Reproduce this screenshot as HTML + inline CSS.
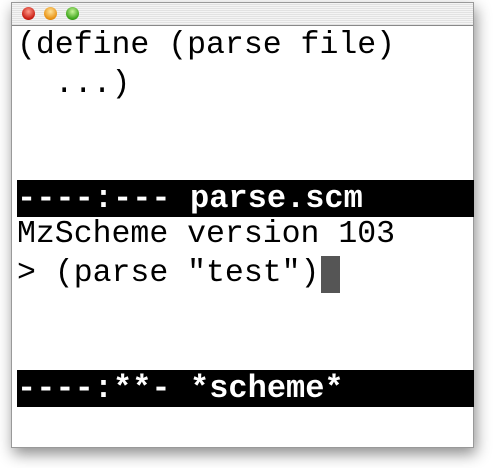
<!DOCTYPE html>
<html><head><style>
html,body{margin:0;padding:0;background:#fff;width:503px;height:468px;overflow:hidden;position:relative}
.win{position:absolute;left:11px;top:2px;width:463px;height:446px;background:#fff;box-shadow:2px 6px 14px rgba(0,0,0,0.45);border:1px solid #999;box-sizing:border-box}
.title{position:absolute;left:0;top:0;right:0;height:22px;background:repeating-linear-gradient(#f4f4f4 0 1px,#e2e2e2 1px 2px);border-bottom:1px solid #888}
.btn{position:absolute;top:4px;width:13px;height:13px;border-radius:50%}
.t{position:absolute;font-family:"Liberation Mono",monospace;font-size:31.5px;color:#000;white-space:pre;line-height:30px}
.bar{position:absolute;left:5px;width:457px;height:37px;background:#000}
.m{position:absolute;font-family:"Liberation Mono",monospace;font-weight:bold;font-size:32px;color:#fff;white-space:pre;line-height:37px;top:0}
</style></head><body>
<div class="win">
<div class="title">
<div class="btn" style="left:10px;background:radial-gradient(circle at 50% 35%,#ff9a8a,#c81a10 70%,#801008)"></div>
<div class="btn" style="left:32px;background:radial-gradient(circle at 50% 35%,#ffe39a,#e89010 70%,#a05808)"></div>
<div class="btn" style="left:54px;background:radial-gradient(circle at 50% 35%,#c8f59a,#3aa418 70%,#1e6a08)"></div>
</div>
<div class="t" style="left:5px;top:28px">(define (parse file)</div>
<div class="t" style="left:5px;top:67px">  ...)</div>
<div class="bar" style="top:177px"><div class="m" style="left:0">----:---</div><div class="m" style="left:173px">parse.scm</div></div>
<div class="t" style="left:5px;top:217px">MzScheme version 103</div>
<div class="t" style="left:5px;top:256px">&gt; (parse "test")</div>
<div style="position:absolute;left:309px;top:253px;width:19px;height:37px;background:#555"></div>
<div class="bar" style="top:367px"><div class="m" style="left:0">----:**-</div><div class="m" style="left:173px">*scheme*</div></div>
</div>
</body></html>
